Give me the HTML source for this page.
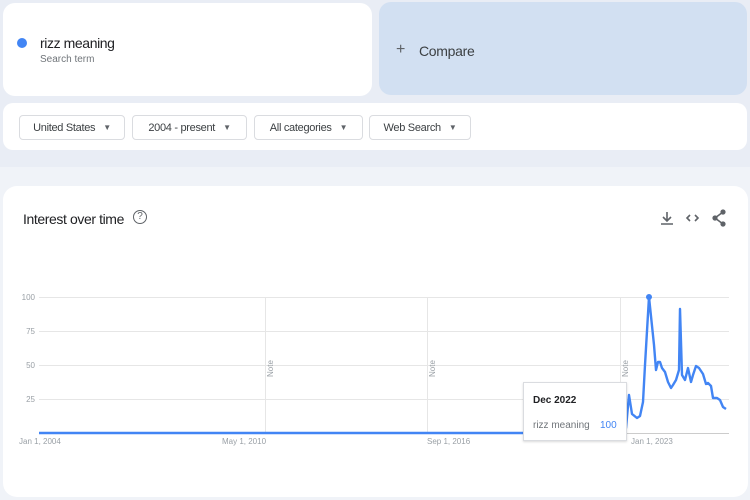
<!DOCTYPE html>
<html><head><meta charset="utf-8"><style>
*{margin:0;padding:0;box-sizing:border-box}
body{width:750px;height:500px;overflow:hidden;background:#e9edf5;font-family:"Liberation Sans",sans-serif;position:relative}
.abs{position:absolute}
.card{background:#fff;border-radius:12px}
.chip{position:absolute;top:115px;height:25px;border:1px solid #dadce0;border-radius:4px;background:#fff;font-size:11px;color:#3c4043;display:flex;align-items:center;justify-content:center;letter-spacing:-0.3px}
.chip i{font-style:normal;font-size:8px;margin-left:8px;color:#5f6368}
</style></head><body>
<div class="abs card" style="left:3px;top:3px;width:369px;height:93px"></div>
<div class="abs" style="left:17px;top:38px;width:10px;height:10px;border-radius:50%;background:#4285f4"></div>
<div class="abs" style="left:40px;top:35px;font-size:14px;color:#202124;letter-spacing:-0.4px">rizz meaning</div>
<div class="abs" style="left:40px;top:54px;font-size:10px;color:#70757a">Search term</div>
<div class="abs" style="left:379px;top:2px;width:368px;height:93px;background:#d2e0f2;border-radius:12px"></div>
<div class="abs" style="left:396px;top:41px;font-size:16px;color:#5f6368">+</div>
<div class="abs" style="left:419px;top:43px;font-size:14px;color:#3c4043;letter-spacing:-0.3px">Compare</div>
<div class="abs card" style="left:3px;top:103px;width:744px;height:47px;border-radius:10px"></div>
<div class="chip" style="left:19px;width:106px">United States<i>▼</i></div>
<div class="chip" style="left:132px;width:115px">2004 - present<i>▼</i></div>
<div class="chip" style="left:254px;width:109px">All categories<i>▼</i></div>
<div class="chip" style="left:369px;width:102px">Web Search<i>▼</i></div>
<div class="abs" style="left:0;top:167px;width:750px;height:333px;background:#f0f3f8"></div>
<div class="abs card" style="left:3px;top:186px;width:745px;height:311px;border-radius:14px"></div>
<div class="abs" style="left:23px;top:211px;font-size:14px;color:#202124;letter-spacing:-0.4px">Interest over time</div>
<div class="abs" style="left:133px;top:210px;width:14px;height:14px;border:1.3px solid #5f6368;border-radius:50%;font-size:10px;color:#5f6368;text-align:center;line-height:12px">?</div>
<svg class="abs" style="left:0;top:0" width="750" height="500">
<g stroke="#5f6368" stroke-width="1.6" fill="none">
<path d="M667 212v9M663 217l4 4 4-4M661 224h12"/>
<path d="M690 215l-3 3 3 3M695 215l3 3-3 3"/>
<circle cx="723" cy="212" r="1.8" fill="#5f6368"/><circle cx="715" cy="218" r="1.8" fill="#5f6368"/><circle cx="723" cy="224" r="1.8" fill="#5f6368"/>
<path d="M715 218l8-6M715 218l8 6"/>
</g>
<g stroke="#e6e6e6" stroke-width="1">
<path d="M39 297.5H729M39 331.5H729M39 365.5H729M39 399.5H729"/>
<path d="M265.5 297V433M427.5 297V433M620.5 297V433"/>
</g>
<path d="M39 433.5H729" stroke="#ccc"/>
<g font-size="8" fill="#9aa0a6" font-family="Liberation Sans">
<text x="35" y="300" text-anchor="end">100</text><text x="35" y="334" text-anchor="end">75</text><text x="35" y="368" text-anchor="end">50</text><text x="35" y="402" text-anchor="end">25</text>
<text x="19" y="444">Jan 1, 2004</text><text x="222" y="444">May 1, 2010</text><text x="427" y="444">Sep 1, 2016</text><text x="631" y="444">Jan 1, 2023</text>
<text transform="translate(273,377) rotate(-90)">Note</text>
<text transform="translate(435,377) rotate(-90)">Note</text>
<text transform="translate(628,377) rotate(-90)">Note</text>
</g>
<path d="M39 433H624L626 428L629 395L632 414L637 418L640 416L643 402L645 365L649 297L654 345L656 370L658 362L660 362L662 368L665 372L668 382L671 388L673 385L676 380L679 370L680 309L682 375L685 380L688 368L691 382L693 375L696 366L699 368L703 374L706 384L708 383L711 386L713 398L717 398L720 400L723 407L726 409" stroke="#4285f4" stroke-width="2.4" fill="none" stroke-linejoin="round"/>
<circle cx="649" cy="297" r="3" fill="#4285f4"/>
</svg>
<div class="abs" style="left:523px;top:382px;width:104px;height:59px;background:#fff;border:1px solid #dadce0;box-shadow:0 1px 2px rgba(0,0,0,.15)"></div>
<div class="abs" style="left:533px;top:395px;font-size:10px;font-weight:bold;color:#202124">Dec 2022</div>
<div class="abs" style="left:533px;top:420px;font-size:10px;color:#70757a">rizz meaning</div>
<div class="abs" style="left:600px;top:420px;font-size:10px;color:#4285f4">100</div>
</body></html>
